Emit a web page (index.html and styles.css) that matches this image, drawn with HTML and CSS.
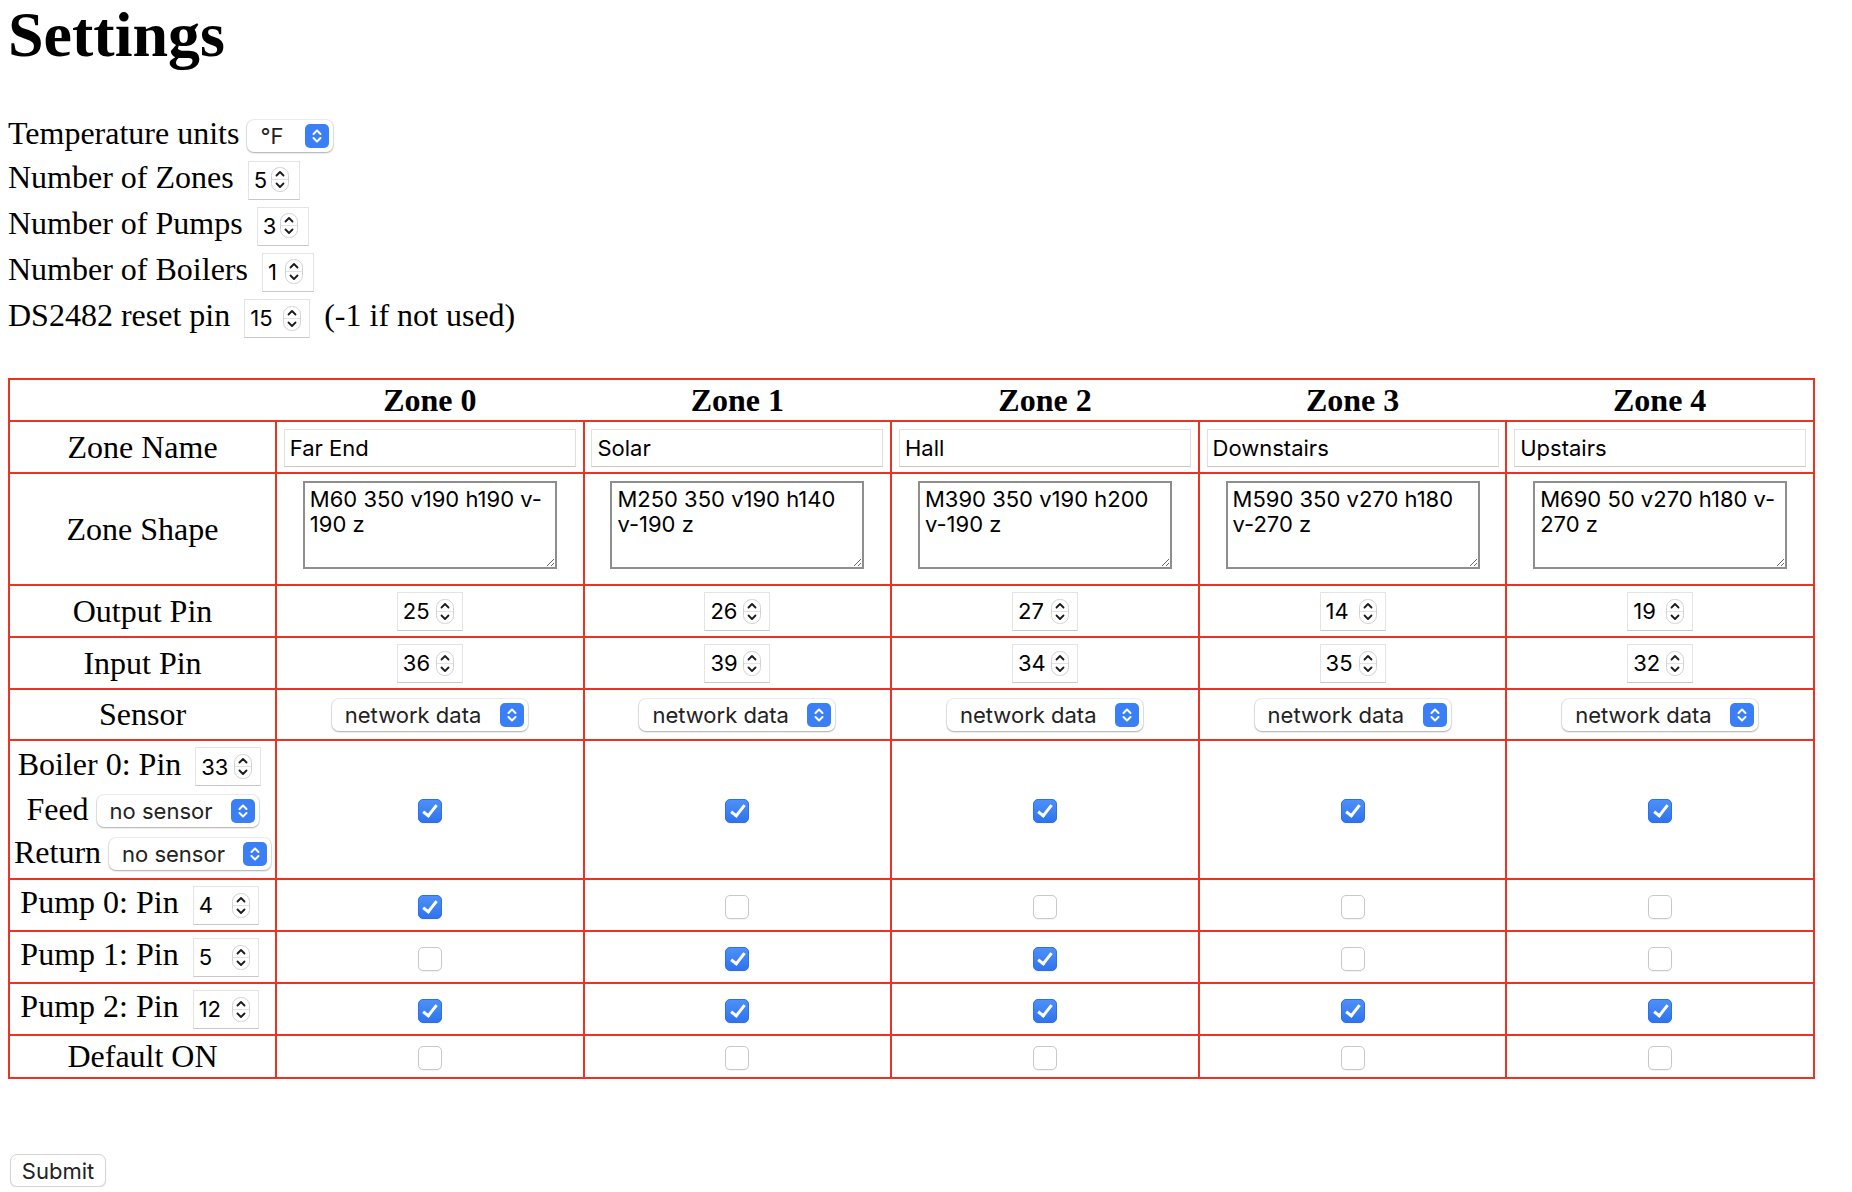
FILE: index.html
```html
<!DOCTYPE html>
<html lang="en">
<head>
<meta charset="utf-8">
<title>Settings</title>
<link rel="stylesheet" href="styles.css">
</head>
<body>
<h1>Settings</h1>
<form>
<div class="field">Temperature units <span class="sel sel-unit"><select><option>°F</option><option>°C</option></select><svg class="arrow" viewBox="0 0 24 24"><rect width="24" height="24" rx="5" fill="#3b7ff6"/><path d="M8.5 10L12 6.5L15.5 10M8.5 14L12 17.5L15.5 14" fill="none" stroke="#fff" stroke-width="2" stroke-linecap="round" stroke-linejoin="round"/></svg></span></div>
<div class="field">Number of Zones <span class="num w1"><input type="number" value="5"><svg class="spin" viewBox="0 0 18 25"><rect x="0.5" y="0.5" width="17" height="24" rx="8" fill="#fff" stroke="#d2d2d2"/><path d="M1 12.5H17" stroke="#e2e2e2"/><path d="M5.5 8.5L9 5L12.5 8.5M5.5 16.5L9 20L12.5 16.5" fill="none" stroke="#1a1a1a" stroke-width="1.8" stroke-linecap="round" stroke-linejoin="round"/></svg></span></div>
<div class="field">Number of Pumps <span class="num w1"><input type="number" value="3"><svg class="spin" viewBox="0 0 18 25"><rect x="0.5" y="0.5" width="17" height="24" rx="8" fill="#fff" stroke="#d2d2d2"/><path d="M1 12.5H17" stroke="#e2e2e2"/><path d="M5.5 8.5L9 5L12.5 8.5M5.5 16.5L9 20L12.5 16.5" fill="none" stroke="#1a1a1a" stroke-width="1.8" stroke-linecap="round" stroke-linejoin="round"/></svg></span></div>
<div class="field">Number of Boilers <span class="num w1"><input type="number" value="1"><svg class="spin" viewBox="0 0 18 25"><rect x="0.5" y="0.5" width="17" height="24" rx="8" fill="#fff" stroke="#d2d2d2"/><path d="M1 12.5H17" stroke="#e2e2e2"/><path d="M5.5 8.5L9 5L12.5 8.5M5.5 16.5L9 20L12.5 16.5" fill="none" stroke="#1a1a1a" stroke-width="1.8" stroke-linecap="round" stroke-linejoin="round"/></svg></span></div>
<div class="field">DS2482 reset pin <span class="num"><input type="number" value="15"><svg class="spin" viewBox="0 0 18 25"><rect x="0.5" y="0.5" width="17" height="24" rx="8" fill="#fff" stroke="#d2d2d2"/><path d="M1 12.5H17" stroke="#e2e2e2"/><path d="M5.5 8.5L9 5L12.5 8.5M5.5 16.5L9 20L12.5 16.5" fill="none" stroke="#1a1a1a" stroke-width="1.8" stroke-linecap="round" stroke-linejoin="round"/></svg></span> (-1 if not used)</div>

<table class="zones">
<colgroup><col class="c-label"><col class="c-zone"><col class="c-zone"><col class="c-zone"><col class="c-zone"><col class="c-zone"></colgroup>
<tr class="r-head"><th></th><th>Zone 0</th><th>Zone 1</th><th>Zone 2</th><th>Zone 3</th><th>Zone 4</th></tr>
<tr class="r-52"><td>Zone Name</td>
<td><input class="name" type="text" value="Far End"></td>
<td><input class="name" type="text" value="Solar"></td>
<td><input class="name" type="text" value="Hall"></td>
<td><input class="name" type="text" value="Downstairs"></td>
<td><input class="name" type="text" value="Upstairs"></td></tr>
<tr class="r-shape"><td>Zone Shape</td>
<td><textarea class="shape">M60 350 v190 h190 v-190 z</textarea></td>
<td><textarea class="shape">M250 350 v190 h140 v-190 z</textarea></td>
<td><textarea class="shape">M390 350 v190 h200 v-190 z</textarea></td>
<td><textarea class="shape">M590 350 v270 h180 v-270 z</textarea></td>
<td><textarea class="shape">M690 50 v270 h180 v-270 z</textarea></td></tr>
<tr class="r-52"><td>Output Pin</td>
<td><span class="num"><input type="number" value="25"><svg class="spin" viewBox="0 0 18 25"><rect x="0.5" y="0.5" width="17" height="24" rx="8" fill="#fff" stroke="#d2d2d2"/><path d="M1 12.5H17" stroke="#e2e2e2"/><path d="M5.5 8.5L9 5L12.5 8.5M5.5 16.5L9 20L12.5 16.5" fill="none" stroke="#1a1a1a" stroke-width="1.8" stroke-linecap="round" stroke-linejoin="round"/></svg></span></td>
<td><span class="num"><input type="number" value="26"><svg class="spin" viewBox="0 0 18 25"><rect x="0.5" y="0.5" width="17" height="24" rx="8" fill="#fff" stroke="#d2d2d2"/><path d="M1 12.5H17" stroke="#e2e2e2"/><path d="M5.5 8.5L9 5L12.5 8.5M5.5 16.5L9 20L12.5 16.5" fill="none" stroke="#1a1a1a" stroke-width="1.8" stroke-linecap="round" stroke-linejoin="round"/></svg></span></td>
<td><span class="num"><input type="number" value="27"><svg class="spin" viewBox="0 0 18 25"><rect x="0.5" y="0.5" width="17" height="24" rx="8" fill="#fff" stroke="#d2d2d2"/><path d="M1 12.5H17" stroke="#e2e2e2"/><path d="M5.5 8.5L9 5L12.5 8.5M5.5 16.5L9 20L12.5 16.5" fill="none" stroke="#1a1a1a" stroke-width="1.8" stroke-linecap="round" stroke-linejoin="round"/></svg></span></td>
<td><span class="num"><input type="number" value="14"><svg class="spin" viewBox="0 0 18 25"><rect x="0.5" y="0.5" width="17" height="24" rx="8" fill="#fff" stroke="#d2d2d2"/><path d="M1 12.5H17" stroke="#e2e2e2"/><path d="M5.5 8.5L9 5L12.5 8.5M5.5 16.5L9 20L12.5 16.5" fill="none" stroke="#1a1a1a" stroke-width="1.8" stroke-linecap="round" stroke-linejoin="round"/></svg></span></td>
<td><span class="num"><input type="number" value="19"><svg class="spin" viewBox="0 0 18 25"><rect x="0.5" y="0.5" width="17" height="24" rx="8" fill="#fff" stroke="#d2d2d2"/><path d="M1 12.5H17" stroke="#e2e2e2"/><path d="M5.5 8.5L9 5L12.5 8.5M5.5 16.5L9 20L12.5 16.5" fill="none" stroke="#1a1a1a" stroke-width="1.8" stroke-linecap="round" stroke-linejoin="round"/></svg></span></td></tr>
<tr class="r-52"><td>Input Pin</td>
<td><span class="num"><input type="number" value="36"><svg class="spin" viewBox="0 0 18 25"><rect x="0.5" y="0.5" width="17" height="24" rx="8" fill="#fff" stroke="#d2d2d2"/><path d="M1 12.5H17" stroke="#e2e2e2"/><path d="M5.5 8.5L9 5L12.5 8.5M5.5 16.5L9 20L12.5 16.5" fill="none" stroke="#1a1a1a" stroke-width="1.8" stroke-linecap="round" stroke-linejoin="round"/></svg></span></td>
<td><span class="num"><input type="number" value="39"><svg class="spin" viewBox="0 0 18 25"><rect x="0.5" y="0.5" width="17" height="24" rx="8" fill="#fff" stroke="#d2d2d2"/><path d="M1 12.5H17" stroke="#e2e2e2"/><path d="M5.5 8.5L9 5L12.5 8.5M5.5 16.5L9 20L12.5 16.5" fill="none" stroke="#1a1a1a" stroke-width="1.8" stroke-linecap="round" stroke-linejoin="round"/></svg></span></td>
<td><span class="num"><input type="number" value="34"><svg class="spin" viewBox="0 0 18 25"><rect x="0.5" y="0.5" width="17" height="24" rx="8" fill="#fff" stroke="#d2d2d2"/><path d="M1 12.5H17" stroke="#e2e2e2"/><path d="M5.5 8.5L9 5L12.5 8.5M5.5 16.5L9 20L12.5 16.5" fill="none" stroke="#1a1a1a" stroke-width="1.8" stroke-linecap="round" stroke-linejoin="round"/></svg></span></td>
<td><span class="num"><input type="number" value="35"><svg class="spin" viewBox="0 0 18 25"><rect x="0.5" y="0.5" width="17" height="24" rx="8" fill="#fff" stroke="#d2d2d2"/><path d="M1 12.5H17" stroke="#e2e2e2"/><path d="M5.5 8.5L9 5L12.5 8.5M5.5 16.5L9 20L12.5 16.5" fill="none" stroke="#1a1a1a" stroke-width="1.8" stroke-linecap="round" stroke-linejoin="round"/></svg></span></td>
<td><span class="num"><input type="number" value="32"><svg class="spin" viewBox="0 0 18 25"><rect x="0.5" y="0.5" width="17" height="24" rx="8" fill="#fff" stroke="#d2d2d2"/><path d="M1 12.5H17" stroke="#e2e2e2"/><path d="M5.5 8.5L9 5L12.5 8.5M5.5 16.5L9 20L12.5 16.5" fill="none" stroke="#1a1a1a" stroke-width="1.8" stroke-linecap="round" stroke-linejoin="round"/></svg></span></td></tr>
<tr class="r-sensor"><td>Sensor</td>
<td><span class="sel sel-net"><select><option>network data</option><option>no sensor</option></select><svg class="arrow" viewBox="0 0 24 24"><rect width="24" height="24" rx="5" fill="#3b7ff6"/><path d="M8.5 10L12 6.5L15.5 10M8.5 14L12 17.5L15.5 14" fill="none" stroke="#fff" stroke-width="2" stroke-linecap="round" stroke-linejoin="round"/></svg></span></td>
<td><span class="sel sel-net"><select><option>network data</option><option>no sensor</option></select><svg class="arrow" viewBox="0 0 24 24"><rect width="24" height="24" rx="5" fill="#3b7ff6"/><path d="M8.5 10L12 6.5L15.5 10M8.5 14L12 17.5L15.5 14" fill="none" stroke="#fff" stroke-width="2" stroke-linecap="round" stroke-linejoin="round"/></svg></span></td>
<td><span class="sel sel-net"><select><option>network data</option><option>no sensor</option></select><svg class="arrow" viewBox="0 0 24 24"><rect width="24" height="24" rx="5" fill="#3b7ff6"/><path d="M8.5 10L12 6.5L15.5 10M8.5 14L12 17.5L15.5 14" fill="none" stroke="#fff" stroke-width="2" stroke-linecap="round" stroke-linejoin="round"/></svg></span></td>
<td><span class="sel sel-net"><select><option>network data</option><option>no sensor</option></select><svg class="arrow" viewBox="0 0 24 24"><rect width="24" height="24" rx="5" fill="#3b7ff6"/><path d="M8.5 10L12 6.5L15.5 10M8.5 14L12 17.5L15.5 14" fill="none" stroke="#fff" stroke-width="2" stroke-linecap="round" stroke-linejoin="round"/></svg></span></td>
<td><span class="sel sel-net"><select><option>network data</option><option>no sensor</option></select><svg class="arrow" viewBox="0 0 24 24"><rect width="24" height="24" rx="5" fill="#3b7ff6"/><path d="M8.5 10L12 6.5L15.5 10M8.5 14L12 17.5L15.5 14" fill="none" stroke="#fff" stroke-width="2" stroke-linecap="round" stroke-linejoin="round"/></svg></span></td></tr>
<tr class="r-boiler"><td>Boiler 0: Pin <span class="num"><input type="number" value="33"><svg class="spin" viewBox="0 0 18 25"><rect x="0.5" y="0.5" width="17" height="24" rx="8" fill="#fff" stroke="#d2d2d2"/><path d="M1 12.5H17" stroke="#e2e2e2"/><path d="M5.5 8.5L9 5L12.5 8.5M5.5 16.5L9 20L12.5 16.5" fill="none" stroke="#1a1a1a" stroke-width="1.8" stroke-linecap="round" stroke-linejoin="round"/></svg></span><br>Feed <span class="sel sel-no"><select><option>no sensor</option><option>network data</option></select><svg class="arrow" viewBox="0 0 24 24"><rect width="24" height="24" rx="5" fill="#3b7ff6"/><path d="M8.5 10L12 6.5L15.5 10M8.5 14L12 17.5L15.5 14" fill="none" stroke="#fff" stroke-width="2" stroke-linecap="round" stroke-linejoin="round"/></svg></span><br>Return <span class="sel sel-no"><select><option>no sensor</option><option>network data</option></select><svg class="arrow" viewBox="0 0 24 24"><rect width="24" height="24" rx="5" fill="#3b7ff6"/><path d="M8.5 10L12 6.5L15.5 10M8.5 14L12 17.5L15.5 14" fill="none" stroke="#fff" stroke-width="2" stroke-linecap="round" stroke-linejoin="round"/></svg></span></td>
<td><input class="cb" type="checkbox" checked></td>
<td><input class="cb" type="checkbox" checked></td>
<td><input class="cb" type="checkbox" checked></td>
<td><input class="cb" type="checkbox" checked></td>
<td><input class="cb" type="checkbox" checked></td></tr>
<tr class="r-52"><td>Pump 0: Pin <span class="num"><input type="number" value="4"><svg class="spin" viewBox="0 0 18 25"><rect x="0.5" y="0.5" width="17" height="24" rx="8" fill="#fff" stroke="#d2d2d2"/><path d="M1 12.5H17" stroke="#e2e2e2"/><path d="M5.5 8.5L9 5L12.5 8.5M5.5 16.5L9 20L12.5 16.5" fill="none" stroke="#1a1a1a" stroke-width="1.8" stroke-linecap="round" stroke-linejoin="round"/></svg></span></td>
<td><input class="cb" type="checkbox" checked></td>
<td><input class="cb" type="checkbox"></td>
<td><input class="cb" type="checkbox"></td>
<td><input class="cb" type="checkbox"></td>
<td><input class="cb" type="checkbox"></td></tr>
<tr class="r-52"><td>Pump 1: Pin <span class="num"><input type="number" value="5"><svg class="spin" viewBox="0 0 18 25"><rect x="0.5" y="0.5" width="17" height="24" rx="8" fill="#fff" stroke="#d2d2d2"/><path d="M1 12.5H17" stroke="#e2e2e2"/><path d="M5.5 8.5L9 5L12.5 8.5M5.5 16.5L9 20L12.5 16.5" fill="none" stroke="#1a1a1a" stroke-width="1.8" stroke-linecap="round" stroke-linejoin="round"/></svg></span></td>
<td><input class="cb" type="checkbox"></td>
<td><input class="cb" type="checkbox" checked></td>
<td><input class="cb" type="checkbox" checked></td>
<td><input class="cb" type="checkbox"></td>
<td><input class="cb" type="checkbox"></td></tr>
<tr class="r-52"><td>Pump 2: Pin <span class="num"><input type="number" value="12"><svg class="spin" viewBox="0 0 18 25"><rect x="0.5" y="0.5" width="17" height="24" rx="8" fill="#fff" stroke="#d2d2d2"/><path d="M1 12.5H17" stroke="#e2e2e2"/><path d="M5.5 8.5L9 5L12.5 8.5M5.5 16.5L9 20L12.5 16.5" fill="none" stroke="#1a1a1a" stroke-width="1.8" stroke-linecap="round" stroke-linejoin="round"/></svg></span></td>
<td><input class="cb" type="checkbox" checked></td>
<td><input class="cb" type="checkbox" checked></td>
<td><input class="cb" type="checkbox" checked></td>
<td><input class="cb" type="checkbox" checked></td>
<td><input class="cb" type="checkbox" checked></td></tr>
<tr class="r-default"><td>Default ON</td>
<td><input class="cb" type="checkbox"></td>
<td><input class="cb" type="checkbox"></td>
<td><input class="cb" type="checkbox"></td>
<td><input class="cb" type="checkbox"></td>
<td><input class="cb" type="checkbox"></td></tr>
</table>
<div class="actions"><input class="submit" type="submit" value="Submit"></div>
</form>
</body>
</html>
```
FILE: styles.css
```css
html {
  background: #fff;
}
body {
  margin: 0 8px;
  font-family: "Liberation Serif", "Times New Roman", serif;
  font-size: 32px;
  color: #000;
}
h1 {
  font-size: 64px;
  font-weight: bold;
  margin: -2px 0 43px;
}
.num {
  display: inline-flex;
  position: relative;
  margin: 3.5px 6px;
}
.num input {
  box-sizing: border-box;
  width: 66px;
  height: 39px;
  margin: 0;
  padding: 0 0 0 5px;
  border: 1px solid #e4e4e4;
  border-bottom-color: #c8c8c8;
  background: #fff;
  font: 22px "Inter", "Liberation Sans", sans-serif;
  color: #000;
  outline: none;
  -moz-appearance: textfield;
}
.num.w1 input {
  width: 52px;
}
.num input::-webkit-inner-spin-button,
.num input::-webkit-outer-spin-button {
  -webkit-appearance: none;
  margin: 0;
}
.spin {
  position: absolute;
  right: 9px;
  top: 7px;
  width: 18px;
  height: 25px;
  pointer-events: none;
}
.num.w1 .spin {
  right: 11px;
  top: 6px;
}
.sel {
  display: inline-flex;
  position: relative;
  margin: 5.5px 0;
}
.sel-unit {
  margin: 5px 0;
}
.sel select {
  -webkit-appearance: none;
  appearance: none;
  box-sizing: border-box;
  height: 32px;
  margin: 0;
  padding: 0 0 0 13px;
  border: none;
  border-radius: 7px;
  background: #fff;
  box-shadow: 0 0 0 1px rgba(0, 0, 0, 0.07), 0 1px 2px rgba(0, 0, 0, 0.28);
  font: 22px "Inter", "Liberation Sans", sans-serif;
  color: #222;
  outline: none;
}
.sel-unit select {
  width: 86px;
}
.sel-net select {
  width: 196px;
}
.sel-no select {
  width: 162px;
}
.arrow {
  position: absolute;
  right: 4px;
  top: 4px;
  width: 24px;
  height: 24px;
  pointer-events: none;
}
.zones {
  border-collapse: collapse;
  table-layout: fixed;
  width: 1807px;
  border: 2px solid #ea3323;
  margin-top: 37px;
}
.c-label {
  width: 267px;
}
.zones th {
  font-weight: bold;
  padding: 0;
  border: none;
  line-height: 36px;
}
.zones td {
  border: 2px solid #ea3323;
  padding: 2px;
  text-align: center;
  vertical-align: middle;
}
.r-head {
  height: 42px;
}
.r-default {
  height: 42px;
}
.r-52 {
  height: 52px;
}
.r-shape {
  height: 112px;
}
.r-sensor {
  height: 51px;
}
.r-boiler {
  height: 139px;
}
.name {
  box-sizing: border-box;
  width: 292px;
  height: 38px;
  margin: 0;
  padding: 0 0 0 5px;
  border: 1px solid #e0e0e0;
  border-bottom-color: #c6c6c6;
  background: #fff;
  font: 22px "Inter", "Liberation Sans", sans-serif;
  color: #000;
  outline: none;
}
.shape {
  display: block;
  box-sizing: border-box;
  width: 254px;
  height: 88px;
  margin: 0 auto 8px;
  padding: 4px 5px;
  border: 2px solid #8e8e8e;
  background: #fff;
  font: 22px/25.3px "Inter", "Liberation Sans", sans-serif;
  color: #000;
  resize: both;
  outline: none;
}
.cb {
  -webkit-appearance: none;
  appearance: none;
  display: block;
  position: relative;
  box-sizing: border-box;
  width: 24px;
  height: 24px;
  margin: 3px auto 0;
  border: 1px solid #c9c9c9;
  border-radius: 5px;
  background: #fff;
  box-shadow: 0 1px 1px rgba(0, 0, 0, 0.05);
}
.cb:checked {
  border-color: #2f6fe8;
  background: linear-gradient(#4d90f8, #2f73ef);
}
.cb:checked::after {
  content: "";
  position: absolute;
  left: 7.5px;
  top: 2px;
  width: 5px;
  height: 12px;
  border: solid #fff;
  border-width: 0 3px 3px 0;
  transform: rotate(38deg);
}
.actions {
  margin-top: 75px;
}
.submit {
  display: block;
  box-sizing: border-box;
  width: 96px;
  height: 33px;
  margin: 0 0 0 2px;
  padding: 0;
  border: 1px solid #d4d4d4;
  border-radius: 7px;
  background: #fff;
  box-shadow: 0 1px 1px rgba(0, 0, 0, 0.12);
  font: 22px "Inter", "Liberation Sans", sans-serif;
  color: #222;
}
```
